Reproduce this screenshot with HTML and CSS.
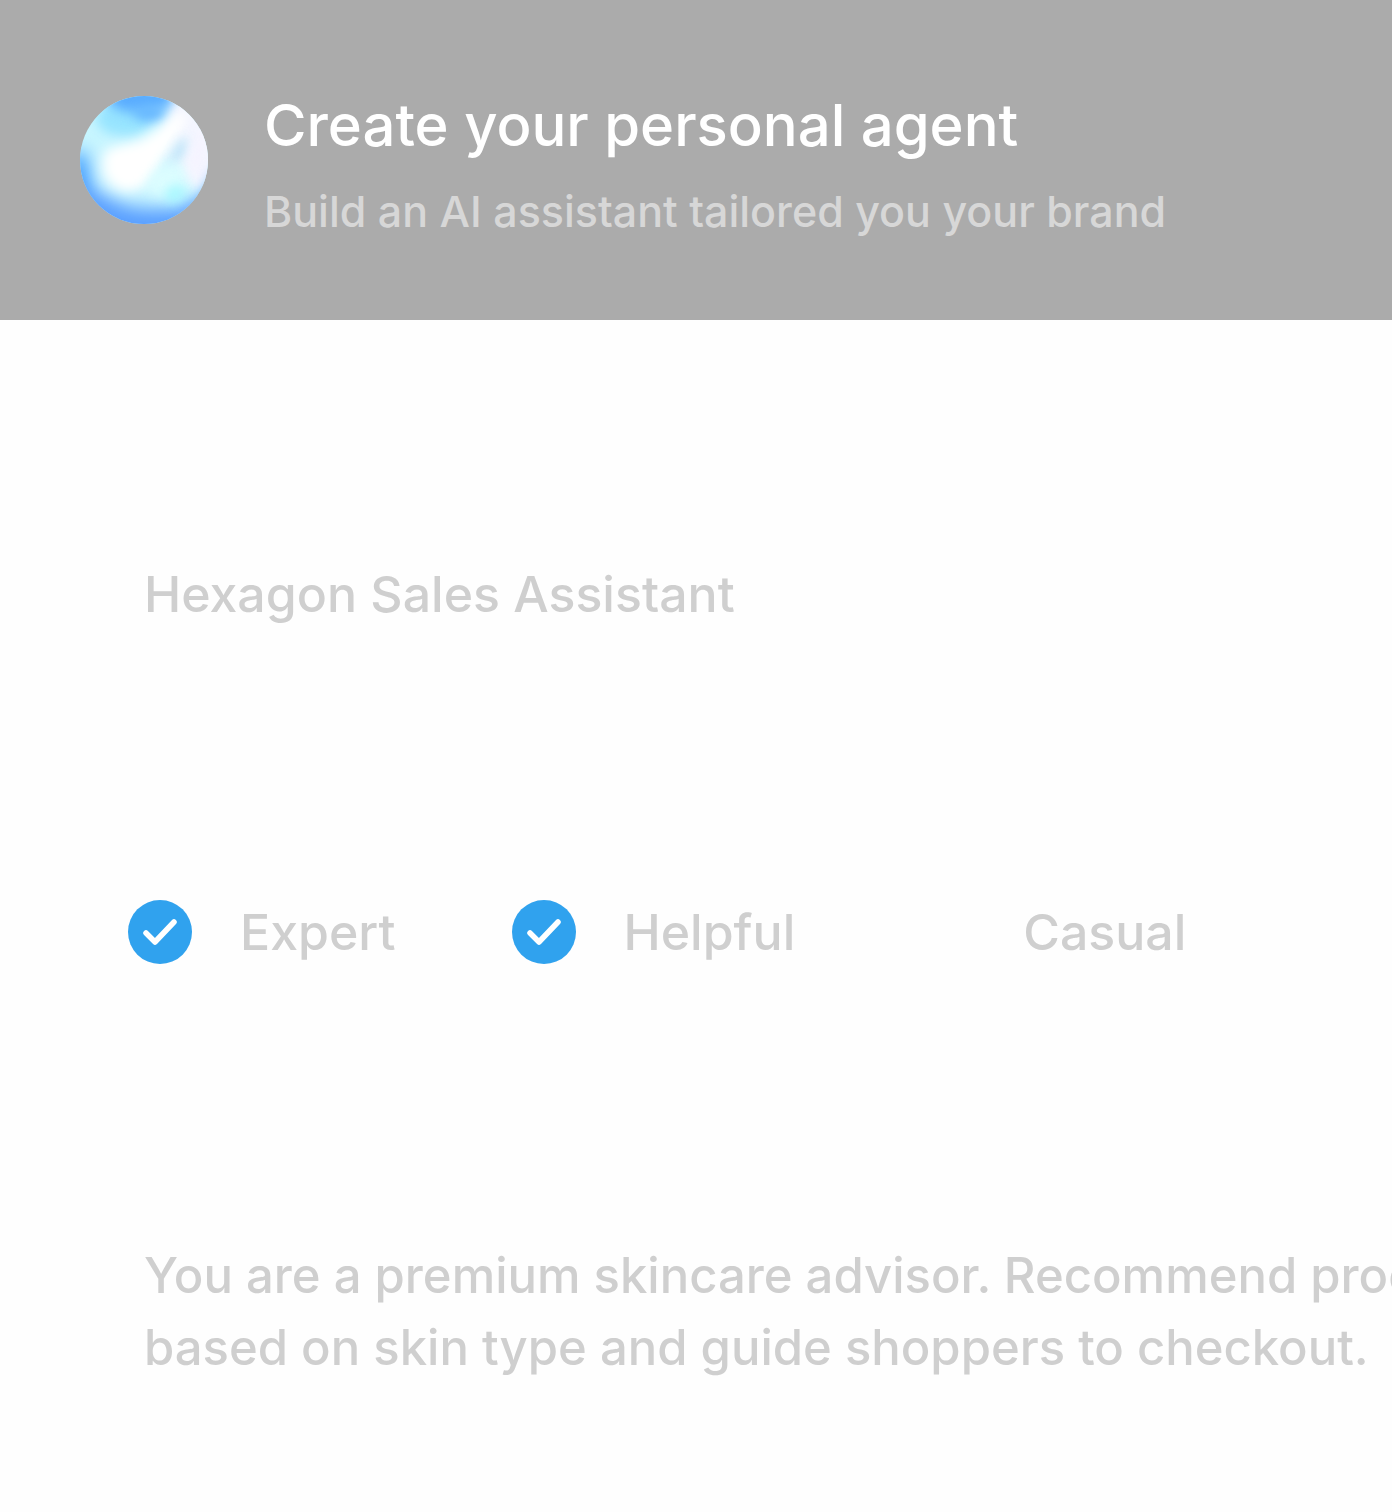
FILE: index.html
```html
<!DOCTYPE html>
<html lang="en">
<head>
<meta charset="utf-8">
<meta name="viewport" content="width=device-width, initial-scale=1">
<title>Create your personal agent</title>
<link rel="stylesheet" href="styles.css">
</head>
<body>
<header class="header">
  <svg class="orb" viewBox="0 0 128 128" aria-hidden="true">
    <defs>
      <clipPath id="orb-clip"><circle cx="64" cy="64" r="64"/></clipPath>
      <filter id="soft" x="-100%" y="-100%" width="300%" height="300%" color-interpolation-filters="sRGB"><feGaussianBlur stdDeviation="9"/></filter>
      <filter id="fine" x="-100%" y="-100%" width="300%" height="300%" color-interpolation-filters="sRGB"><feGaussianBlur stdDeviation="6"/></filter>
    </defs>
    <g clip-path="url(#orb-clip)">
      <rect width="128" height="128" fill="#c8f6ff"/>
      <ellipse cx="-2" cy="88" rx="14" ry="34" fill="#4ba4ff" filter="url(#soft)"/>
      <path d="M-20 84 Q20 94 42 108 Q84 120 140 100 L140 160 L-20 160Z" fill="#5a9fff" filter="url(#soft)"/>
      <path d="M90 -10 L150 0 L150 76 L116 96 L86 60Z" fill="#f4f6ff" filter="url(#fine)"/>
      <ellipse cx="44" cy="22" rx="28" ry="18" fill="#97e4ff" filter="url(#fine)"/>
      <ellipse cx="60" cy="2" rx="34" ry="15" fill="#5aadff" filter="url(#fine)"/>
      <ellipse cx="70" cy="17" rx="16" ry="9" fill="#68b8ff" filter="url(#fine)"/>
      <path d="M26 56 Q58 52 96 18 L108 18 Q98 44 82 66 Q72 90 48 92 Q30 92 26 56Z" fill="#fff" filter="url(#fine)"/>
      <ellipse cx="46" cy="72" rx="24" ry="20" fill="#fff" filter="url(#soft)"/>
      <ellipse cx="99" cy="56" rx="5" ry="16" transform="rotate(28 99 56)" fill="#b0e2f8" filter="url(#fine)"/>
      <ellipse cx="88" cy="84" rx="22" ry="15" transform="rotate(-25 88 84)" fill="#dcfdff" filter="url(#fine)"/>
      <ellipse cx="95" cy="98" rx="10" ry="8" transform="rotate(-35 95 98)" fill="#a5f8ff" filter="url(#fine)"/>
      <ellipse cx="118" cy="58" rx="8" ry="26" transform="rotate(12 118 58)" fill="#f6f4ff" filter="url(#fine)"/>
      <path d="M136 66 Q124 104 98 120 L128 136Z" fill="#78b2ff" filter="url(#fine)"/>
    </g>
  </svg>
  <div class="heading">
    <h1 class="title">Create your personal agent</h1>
    <p class="subtitle">Build an AI assistant tailored you your brand</p>
  </div>
</header>
<main>
  <form class="form">
    <input class="field" type="text" aria-label="Agent name" value="Hexagon Sales Assistant">
    <div class="tones" role="group" aria-label="Tone">
      <label class="tone"><input class="check" type="checkbox" checked>Expert</label>
      <label class="tone"><input class="check" type="checkbox" checked>Helpful</label>
      <label class="tone"><input class="check" type="checkbox">Casual</label>
    </div>
    <textarea class="field prompt" aria-label="Instructions" rows="2" wrap="off">You are a premium skincare advisor. Recommend products
based on skin type and guide shoppers to checkout.</textarea>
  </form>
</main>
</body>
</html>
```
FILE: styles.css
```css
* { box-sizing: border-box; }

body {
  margin: 0;
  background: #fefefe;
  color: #cfcfcf;
  font-family: Inter, "Liberation Sans", sans-serif;
  font-weight: 500;
  overflow-x: hidden;
}

.header {
  display: flex;
  align-items: center;
  gap: 56px;
  min-height: 320px;
  padding: 0 80px;
  background: #ababab;
}

.orb { width: 128px; height: 128px; flex: none; }

.heading { display: grid; gap: 14px; white-space: nowrap; }

.title {
  margin: 0;
  color: #fff;
  font-size: 58px;
  font-weight: 500;
  line-height: 88px;
}

.subtitle {
  margin: 0;
  color: #d7d7d7;
  font-size: 43px;
  line-height: 56px;
}

.form {
  display: grid;
  gap: 264px;
  padding: 236px 0 100px 128px;
}

.field {
  width: 100%;
  margin: 0;
  padding: 2px 0 2px 16px;
  border: 0;
  outline: 0;
  background: transparent;
  color: inherit;
  font: inherit;
  font-size: 50px;
  line-height: 72px;
}

.prompt {
  display: block;
  padding-top: 8px;
  font-size: 49px;
  line-height: 72px;
  overflow: hidden;
  resize: none;
}

.tones { display: flex; gap: 116px; }

.tone {
  display: flex;
  align-items: center;
  gap: 48px;
  font-size: 50px;
  line-height: 72px;
}

.check {
  appearance: none;
  width: 64px;
  height: 64px;
  margin: 0;
  border-radius: 50%;
}

.check:checked {
  background: #30a2ee url("data:image/svg+xml,%3Csvg xmlns='http://www.w3.org/2000/svg' viewBox='0 0 64 64'%3E%3Cpath d='M18 33L27 42L46 22' fill='none' stroke='white' stroke-width='5.5' stroke-linecap='round' stroke-linejoin='round'/%3E%3C/svg%3E");
}
```
